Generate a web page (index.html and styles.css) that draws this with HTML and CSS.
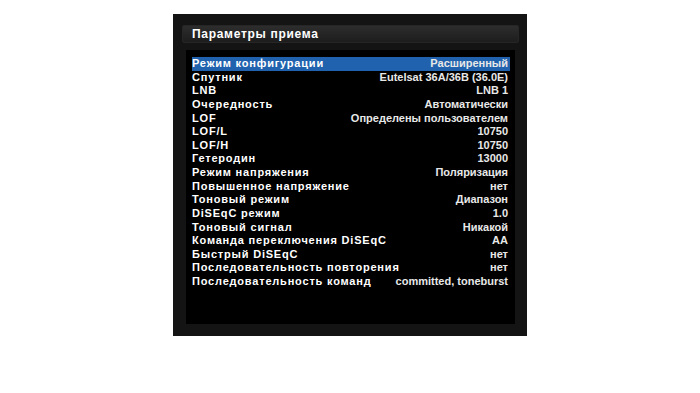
FILE: index.html
```html
<!DOCTYPE html>
<html lang="ru">
<head>
    <meta charset="UTF-8">
    <meta name="viewport" content="width=device-width, initial-scale=1.0">
    <title>Параметры приема</title>
    <link rel="stylesheet" href="styles.css">
</head>
<body>
    <div class="panel">
        <div class="title-bar">Параметры приема</div>
        <div class="content">
            <div class="row selected"><span class="label">Режим конфигурации</span><span class="value">Расширенный</span></div>
            <div class="row"><span class="label">Спутник</span><span class="value">Eutelsat 36A/36B (36.0E)</span></div>
            <div class="row"><span class="label">LNB</span><span class="value">LNB 1</span></div>
            <div class="row"><span class="label">Очередность</span><span class="value">Автоматически</span></div>
            <div class="row"><span class="label">LOF</span><span class="value">Определены пользователем</span></div>
            <div class="row"><span class="label">LOF/L</span><span class="value">10750</span></div>
            <div class="row"><span class="label">LOF/H</span><span class="value">10750</span></div>
            <div class="row"><span class="label">Гетеродин</span><span class="value">13000</span></div>
            <div class="row"><span class="label">Режим напряжения</span><span class="value">Поляризация</span></div>
            <div class="row"><span class="label">Повышенное напряжение</span><span class="value">нет</span></div>
            <div class="row"><span class="label">Тоновый режим</span><span class="value">Диапазон</span></div>
            <div class="row"><span class="label">DiSEqC режим</span><span class="value">1.0</span></div>
            <div class="row"><span class="label">Тоновый сигнал</span><span class="value">Никакой</span></div>
            <div class="row"><span class="label">Команда переключения DiSEqC</span><span class="value">AA</span></div>
            <div class="row"><span class="label">Быстрый DiSEqC</span><span class="value">нет</span></div>
            <div class="row"><span class="label">Последовательность повторения</span><span class="value">нет</span></div>
            <div class="row"><span class="label">Последовательность команд</span><span class="value">committed, toneburst</span></div>
        </div>
    </div>
</body>
</html>
```

FILE: styles.css
```css
body {
    margin: 0;
    padding: 0;
    background-color: #ffffff;
    font-family: 'Liberation Sans', Arial, sans-serif;
}

.panel {
    width: 354px;
    height: 322px;
    margin: 14px auto 0;
    padding: 11px 8px 12px 9px;
    box-sizing: border-box;
    background-color: #141414;
    display: flex;
    flex-direction: column;
}

.title-bar {
    height: 18px;
    box-sizing: border-box;
    padding: 1px 0 0 10px;
    border-radius: 3px;
    background: linear-gradient(#2e2e2e, #1c1c1c);
    box-shadow: inset 0 0 0 1px #262626;
    color: #ffffff;
    font-size: 12px;
    font-weight: bold;
    line-height: 17px;
    letter-spacing: 0.7px;
}

.content {
    flex: 1;
    margin: 7px 4px 0;
    padding: 7px 5px 0 6px;
    background-color: #000000;
}

.row {
    display: flex;
    justify-content: space-between;
    height: 13.63px;
    line-height: 13.63px;
    padding-right: 2px;
    color: #ffffff;
    font-size: 11px;
    font-weight: bold;
}

.label {
    letter-spacing: 0.8px;
}

.value {
    color: #e8e8e8;
}

.selected {
    background-color: #2062ad;
}
```
